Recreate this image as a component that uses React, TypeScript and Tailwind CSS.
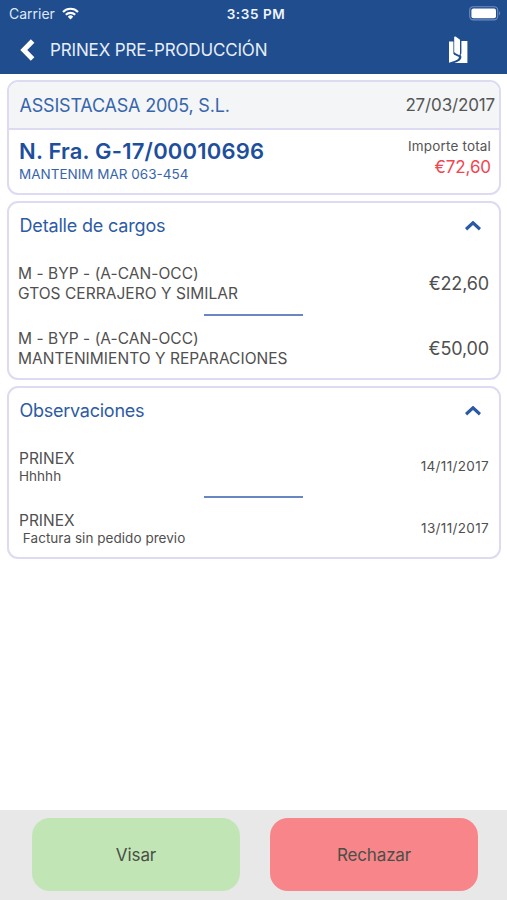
import React, { useState } from 'react';

interface Charge {
  code: string;
  concept: string;
  amount: string;
}

interface Note {
  author: string;
  text: string;
  date: string;
}

const charges: Charge[] = [
  { code: 'M - BYP - (A-CAN-OCC)', concept: 'GTOS CERRAJERO Y SIMILAR', amount: '€22,60' },
  { code: 'M - BYP - (A-CAN-OCC)', concept: 'MANTENIMIENTO Y REPARACIONES', amount: '€50,00' },
];

const notes: Note[] = [
  { author: 'PRINEX', text: 'Hhhhh', date: '14/11/2017' },
  { author: 'PRINEX', text: ' Factura sin pedido previo', date: '13/11/2017' },
];

const StatusBar: React.FC = () => (
  <div className="grid h-[27px] grid-cols-3 items-center pl-[9px] pr-[6px] text-white">
    <div className="flex items-center gap-[7px]">
      <span className="text-[14px] leading-[18px] text-[#dfe8f8]">Carrier</span>
      <svg width="17" height="13" viewBox="0 0 17 13" fill="none" stroke="currentColor" strokeWidth="2.1">
        <path d="M1 4.9a10.6 10.6 0 0 1 15 0" />
        <path d="M3.8 7.8a6.7 6.7 0 0 1 9.4 0" />
        <path d="M8.5 12.4 5.8 9.7a3.8 3.8 0 0 1 5.4 0z" fill="currentColor" stroke="none" />
      </svg>
    </div>
    <span className="ml-[2px] text-center text-[13.5px] font-semibold leading-[18px] tracking-[0.6px] text-[#f0f5ff]">3:35 PM</span>
    <svg className="justify-self-end" width="32" height="15" viewBox="0 0 32 15" fill="none">
      <rect x="0.7" y="0.7" width="28" height="13.2" rx="3.6" stroke="#6f8dc0" strokeWidth="1.1" />
      <rect x="2.4" y="2.4" width="24.6" height="9.8" rx="2" fill="white" />
      <path d="M30.2 5.2c1.3.6 1.3 3.6 0 4.2z" fill="#6f8dc0" />
    </svg>
  </div>
);

const Header: React.FC = () => (
  <header className="h-[74px] bg-[#204d8e]">
    <StatusBar />
    <div className="flex h-[46px] items-center pl-5 pr-[38px]">
      <svg width="15" height="22" viewBox="0 0 15 22" fill="none" stroke="white" strokeWidth="5">
        <path d="M12.6 2 3.8 11l8.8 9" />
      </svg>
      <h1 className="ml-[15px] flex-1 text-[17px] leading-[22px] tracking-[-0.15px] text-[#e6eefb]">PRINEX PRE-PRODUCCIÓN</h1>
      <svg width="21" height="28" viewBox="0 0 21 28" fill="white">
        <path d="M1 5.4h4.4v11.8c0 .9.5 1.4 1.4 1.9l4.2 1.9c-.2 1.8-1.6 2.8-4 3.8L1 26.8z" />
        <path d="M6.2.8 7.6.4l4.4 3.4v13c0 1-.2 1.7-.6 2.4l-3.8-2c-.9-.5-1.4-1-1.4-2z" />
        <path d="M13.4 5h6v22H6.2c4.4-1.3 7.2-3 7.2-6 0-1-.3-1.5-.8-2.1.6-.7.8-1.3.8-2.1z" />
      </svg>
    </div>
  </header>
);

const Card: React.FC<{ className?: string; children: React.ReactNode }> = ({ className = '', children }) => (
  <section className={`overflow-hidden rounded-[11px] border-2 border-[#dddbf2] bg-white ${className}`}>{children}</section>
);

const Separator: React.FC = () => <div className="ml-[195px] h-[2px] w-[99px] bg-[#6886c1]" />;

interface PanelProps {
  title: string;
  className: string;
  titleClassName: string;
  children: React.ReactNode;
}

const Panel: React.FC<PanelProps> = ({ title, className, titleClassName, children }) => {
  const [open, setOpen] = useState(true);

  return (
    <Card className={open ? className : ''}>
      <button type="button" onClick={() => setOpen(!open)} className="flex h-[46px] w-full items-center justify-between pl-[10.5px] pr-[18px] text-left text-[#2d5ba5]">
        <span className={`text-[18px] leading-6 ${titleClassName}`}>{title}</span>
        <svg className={open ? '' : 'rotate-180'} width="16" height="10" viewBox="0 0 16 10" fill="none" stroke="#2a5aa3" strokeWidth="3.2">
          <path d="M1 8.2l7-6.4 7 6.4" />
        </svg>
      </button>
      {open && children}
    </Card>
  );
};

const ChargeRow: React.FC<{ charge: Charge }> = ({ charge }) => (
  <div className="flex h-10 items-center justify-between pl-[9px] pr-[10px] text-[#505050]">
    <div className="text-[15.5px] leading-5 tracking-[0.04px]">
      <p>{charge.code}</p>
      <p>{charge.concept}</p>
    </div>
    <span className="-mt-px text-[18px] tracking-[-0.15px]">{charge.amount}</span>
  </div>
);

const NoteRow: React.FC<{ note: Note }> = ({ note }) => (
  <div className="flex h-[35px] items-center justify-between pl-[10px] pr-[10px] text-[#505050]">
    <div>
      <p className="text-[15.5px] leading-[19px]">{note.author}</p>
      <p className="whitespace-pre text-[13.5px] leading-4 tracking-[0.04px]">{note.text}</p>
    </div>
    <span className="text-[13.5px] leading-[19px] tracking-[0.35px]">{note.date}</span>
  </div>
);

export default function App() {
  return (
    <div className="flex h-[900px] w-full flex-col bg-white font-['Inter',sans-serif]">
      <Header />

      <main className="flex flex-1 flex-col gap-[6px] pl-[7px] pr-[6px] pt-[6px]">
        <Card className="h-[115px]">
          <div className="flex h-[48px] items-center justify-between border-b-2 border-[#dddbf2] bg-[#f3f5f7] pl-[10.5px] pr-[4px]">
            <span className="text-[18px] tracking-[-0.2px] text-[#3765ac]">ASSISTACASA 2005, S.L.</span>
            <span className="pt-[2px] text-[17px] tracking-[-0.15px] text-[#555]">27/03/2017</span>
          </div>
          <div className="flex justify-between pl-[10px] pr-[8px] pt-[6px]">
            <div className="text-[#1d4f9c]">
              <h2 className="text-[22px] font-semibold leading-[30px] tracking-[0.2px]">N. Fra. G-17/00010696</h2>
              <p className="text-[13.5px] leading-4 text-[#3765ac]">MANTENIM MAR 063-454</p>
            </div>
            <div className="pt-px text-right">
              <p className="text-[13.5px] leading-[18px] tracking-[0.17px] text-[#555]">Importe total</p>
              <p className="text-[17px] leading-6 tracking-[-0.1px] text-[#ef4650]">€72,60</p>
            </div>
          </div>
        </Card>

        <Panel title="Detalle de cargos" className="h-[179px]" titleClassName="tracking-[-0.17px]">
          <div className="flex flex-col pt-[15px]">
            <ChargeRow charge={charges[0]} />
            <div className="pb-[13px] pt-[10px]"><Separator /></div>
            <ChargeRow charge={charges[1]} />
          </div>
        </Panel>

        <Panel title="Observaciones" className="h-[173px]" titleClassName="tracking-[-0.25px]">
          <div className="flex flex-col pt-[15px]">
            <NoteRow note={notes[0]} />
            <div className="pb-[13px] pt-[12px]"><Separator /></div>
            <NoteRow note={notes[1]} />
          </div>
        </Panel>
      </main>

      <footer className="flex h-[90px] gap-[30px] bg-[#e8e8e8] pb-[9px] pl-8 pr-[29px] pt-2 text-[17px] text-[#4a4f48]">
        <button type="button" className="flex-1 rounded-[18px] bg-[#c2e5b5] pt-[2px] tracking-[-0.1px]">Visar</button>
        <button type="button" className="flex-1 rounded-[18px] bg-[#f78589] pt-[2px] tracking-[-0.15px]">Rechazar</button>
      </footer>
    </div>
  );
}
